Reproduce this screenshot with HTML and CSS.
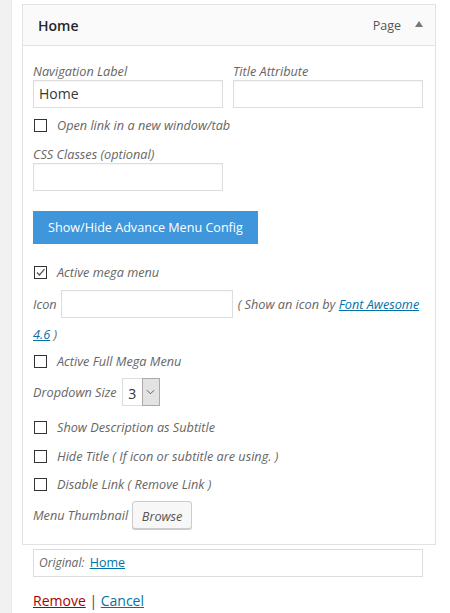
FILE: index.html
```html
<!DOCTYPE html>
<html>
<head>
<meta charset="utf-8">
<link rel="stylesheet" href="styles.css">
</head>
<body>
<div class="page">
  <div class="strip"></div>
  <div class="main">
    <div class="card">
      <div class="card-head">
        <span class="card-title">Home</span>
        <span class="card-type">Page</span>
        <span class="toggle"></span>
      </div>
      <div class="card-body">
        <div class="two-col">
          <div class="field">
            <div class="label">Navigation Label</div>
            <div class="input wide">Home</div>
          </div>
          <div class="field">
            <div class="label">Title Attribute</div>
            <div class="input wide"></div>
          </div>
        </div>
        <div class="check-row first"><span class="cb"></span><span class="label">Open link in a new window/tab</span></div>
        <div class="label gap11">CSS Classes (optional)</div>
        <div class="input wide"></div>
        <div class="btn-primary">Show/Hide Advance Menu Config</div>
        <div class="check-row gap19"><span class="cb checked"><svg viewBox="0 0 11 11" width="11" height="11"><path d="M2 5.5 L4.5 8 L9.5 2.2" fill="none" stroke="#555" stroke-width="1.3"/></svg></span><span class="label">Active mega menu</span></div>
        <div class="icon-row"><span class="label">Icon</span><span class="input icon-input"></span><span class="label">( Show an icon by <a class="link" href="#">Font Awesome</a></span></div>
        <div class="icon-row2 label"><a class="link" href="#">4.6</a> )</div>
        <div class="check-row gap9"><span class="cb"></span><span class="label">Active Full Mega Menu</span></div>
        <div class="select-row"><span class="label">Dropdown Size</span><span class="select"><span class="select-val">3</span><span class="select-arrow"><svg viewBox="0 0 10 6" width="9" height="6"><path d="M1 1 L5 5 L9 1" fill="none" stroke="#555" stroke-width="1"/></svg></span></span></div>
        <div class="check-row gap12"><span class="cb"></span><span class="label">Show Description as Subtitle</span></div>
        <div class="check-row gap11"><span class="cb"></span><span class="label">Hide Title ( If icon or subtitle are using. )</span></div>
        <div class="check-row gap10"><span class="cb"></span><span class="label">Disable Link ( Remove Link )</span></div>
        <div class="thumb-row"><span class="label">Menu Thumbnail</span><span class="btn">Browse</span></div>
      </div>
    </div>
    <div class="original"><span class="label">Original:</span> <a class="link" href="#">Home</a></div>
    <div class="actions"><a class="remove" href="#">Remove</a> | <a class="link" href="#">Cancel</a></div>
  </div>
</div>
</body>
</html>
```
FILE: styles.css
```css
html, body {
  margin: 0;
  padding: 0;
  background: #fff;
  font-family: "Open Sans", "Noto Sans", sans-serif;
  font-size: 13px;
  color: #444;
}
.page {
  display: flex;
  min-height: 613px;
}
.strip {
  width: 11px;
  background: #f1f1f1;
  border-right: 1px solid #e8e8e8;
  flex: none;
}
.main {
  padding-left: 10px;
  width: 414px;
}
.card {
  margin-top: 4px;
  border: 1px solid #e2e2e2;
}
.card-head {
  height: 40px;
  background: #fafafa;
  border-bottom: 1px solid #e2e2e2;
  display: flex;
  align-items: center;
  padding: 0 12px 0 15px;
}
.card-title {
  font-size: 14px;
  font-weight: 600;
  color: #23282d;
  flex: 1;
}
.card-type {
  font-size: 12.5px;
  color: #555;
  margin-right: 14px;
}
.toggle {
  width: 0;
  height: 0;
  border-left: 4px solid transparent;
  border-right: 4px solid transparent;
  border-bottom: 6px solid #777;
  margin-bottom: 3px;
}
.card-body {
  padding: 16px 12px 15px 10px;
}
.label {
  font-style: italic;
  color: #666;
  line-height: 18px;
  font-size: 12.7px;
}
.two-col {
  display: flex;
  gap: 10px;
}
.field {
  width: 190px;
}
.input {
  box-sizing: border-box;
  height: 28px;
  border: 1px solid #ddd;
  background: #fff;
  box-shadow: inset 0 1px 2px rgba(0,0,0,0.04);
  padding: 0 5px;
  line-height: 26px;
  font-size: 14px;
  color: #32373c;
}
.input.wide {
  width: 190px;
}
.check-row {
  display: flex;
  align-items: center;
  height: 18px;
}
.check-row.first { margin-top: 8px; }
.gap9 { margin-top: 9px; }
.gap10 { margin-top: 10px; }
.gap11 { margin-top: 11px; }
.gap12 { margin-top: 12px; }
.gap19 { margin-top: 19px; }
.cb {
  box-sizing: border-box;
  width: 13px;
  height: 13px;
  border: 1px solid #333;
  margin-left: 1px;
  margin-right: 10px;
  background: #fff;
  display: flex;
  align-items: center;
  justify-content: center;
  flex: none;
}
.btn-primary {
  margin-top: 20px;
  width: 225px;
  height: 33px;
  background: #3f96db;
  color: #fff;
  font-size: 12.6px;
  line-height: 33px;
  text-align: center;
}
.icon-row {
  margin-top: 9px;
  display: flex;
  align-items: center;
  white-space: nowrap;
}
.icon-input {
  width: 172px;
  margin: 0 5px 0 4px;
}
.icon-row2 {
  margin-top: 7px;
}
.link {
  color: #0073aa;
  text-decoration: underline;
}
.select-row {
  margin-top: 8px;
  display: flex;
  align-items: center;
}
.select {
  margin-left: 5px;
  box-sizing: border-box;
  width: 38px;
  height: 28px;
  border: 1px solid #ddd;
  display: flex;
}
.select-val {
  flex: 1;
  text-align: center;
  font-size: 14px;
  line-height: 26px;
  color: #333;
  padding-top: 2px;
}
.select-arrow {
  width: 16px;
  background: #e3e3e3;
  border: 1px solid #aaa;
  margin: -1px -1px -1px 0;
  display: flex;
  align-items: center;
  justify-content: center;
}
.thumb-row {
  margin-top: 8px;
  display: flex;
  align-items: center;
}
.btn {
  margin-left: 4px;
  box-sizing: border-box;
  width: 60px;
  height: 28px;
  border: 1px solid #ccc;
  border-radius: 3px;
  background: #f7f7f7;
  box-shadow: 0 1px 0 #ccc;
  font-style: italic;
  color: #555;
  font-size: 12.7px;
  text-align: center;
  line-height: 28px;
}
.original {
  box-sizing: border-box;
  margin: 4px 0 0 11px;
  width: 390px;
  height: 28px;
  border: 1px solid #ddd;
  padding-left: 5px;
  line-height: 26px;
  font-size: 12.5px;
}
.original .label { font-size: 12px; margin-right: 2px; }
.actions {
  margin: 14px 0 0 11px;
  font-size: 14px;
  color: #444;
}
.remove {
  color: #a00;
  text-decoration: underline;
}
```
